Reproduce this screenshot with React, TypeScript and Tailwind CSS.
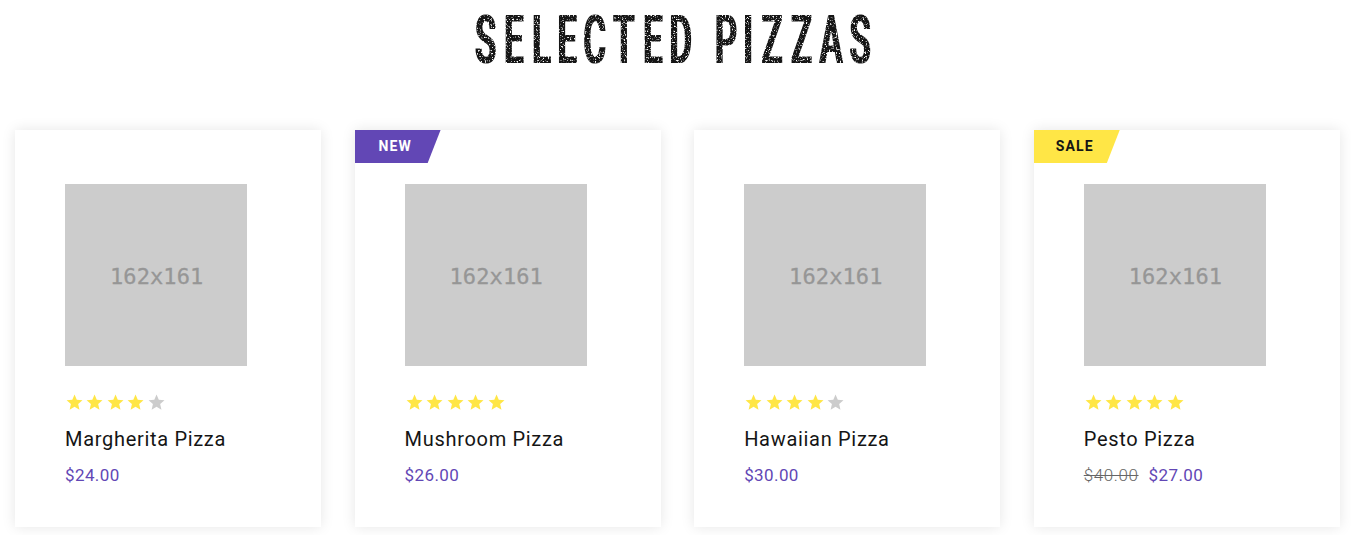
import clsx from 'clsx';

interface Pizza {
  name: string;
  price: string;
  oldPrice?: string;
  rating: number;
  badge?: 'new' | 'sale';
}

const pizzas: Pizza[] = [
  { name: 'Margherita Pizza', price: '$24.00', rating: 4 },
  { name: 'Mushroom Pizza', price: '$26.00', rating: 5, badge: 'new' },
  { name: 'Hawaiian Pizza', price: '$30.00', rating: 4 },
  { name: 'Pesto Pizza', price: '$27.00', oldPrice: '$40.00', rating: 5, badge: 'sale' },
];

const HEADING = 'SELECTED PIZZAS';
// centre of every character, the space included
const HEADING_CENTERS = [20.5, 48.8, 76.4, 102.2, 129.7, 159, 187.9, 215.7, 238, 261, 283, 307, 336.5, 366, 395.2];
const HEADING_SCALE = 0.51;

function Heading() {
  return (
    <h2 className="flex justify-center">
      <svg width="421" height="84" viewBox="0 0 421 84" aria-label={HEADING} className="overflow-visible">
        <defs>
          <filter id="worn" x="0" y="0" width="421" height="84" filterUnits="userSpaceOnUse" colorInterpolationFilters="sRGB">
            <feMorphology in="SourceGraphic" operator="dilate" radius="1 0" result="thick" />
            <feTurbulence type="fractalNoise" baseFrequency="0.73" numOctaves="2" seed="4" result="noise" />
            <feColorMatrix in="noise" type="matrix" values="0 0 0 0 0  0 0 0 0 0  0 0 0 0 0  5 0 0 0 -2.75" result="specks" />
            <feComposite in="thick" in2="specks" operator="out" />
          </filter>
        </defs>
        <g filter="url(#worn)">
          <text
            x={HEADING_CENTERS.map((x) => x / HEADING_SCALE).join(' ')}
            y="63"
            transform={`scale(${HEADING_SCALE} 1)`}
            textAnchor="middle"
            fill="#151515"
            className="font-['Roboto',sans-serif] text-[67px] font-medium"
          >
            {HEADING}
          </text>
        </g>
      </svg>
    </h2>
  );
}

function Rating({ value }: { value: number }) {
  return (
    <div className="mt-[27px] flex gap-[1.4px]">
      {[1, 2, 3, 4, 5].map((n) => (
        <svg
          key={n}
          viewBox="0 0 24 24"
          className={clsx('h-[19.1px] w-[19.1px]', n <= value ? 'fill-[#ffe646]' : 'fill-[#cccccc]')}
        >
          <path d="M12 17.27 18.18 21l-1.64-7.03L22 9.24l-7.19-.62L12 2 9.19 8.62 2 9.24l5.45 4.73L5.82 21z" />
        </svg>
      ))}
    </div>
  );
}

function PizzaCard({ pizza }: { pizza: Pizza }) {
  return (
    <article className="relative h-[397px] w-[306.2px] shrink-0 bg-white pt-[54px] pl-[50px] shadow-[0_0_13px_rgba(0,0,0,0.1)]">
      {pizza.badge && (
        <span
          className={clsx(
            'absolute top-0 left-0 h-[33px] w-[86px] text-[14px] leading-[33px] font-bold tracking-[1.1px] [clip-path:polygon(0_0,100%_0,85%_100%,0_100%)]',
            pizza.badge === 'new' ? 'bg-[#6247b5] pl-6 text-white' : 'bg-[#ffe646] pl-[22px] text-[#151515]'
          )}
        >
          {pizza.badge === 'new' ? 'NEW' : 'SALE'}
        </span>
      )}

      <div className="flex h-[182px] w-[182.3px] items-center justify-center bg-[#cccccc] pt-[3px] pl-px font-['DejaVu_Sans_Mono',monospace] text-[22px] tracking-[0.1px] text-[#969696] [-webkit-text-stroke:0.3px_#969696]">
        162x161
      </div>

      <Rating value={pizza.rating} />

      <h3 className="mt-[12.9px] text-[20px] leading-[28px] tracking-[0.69px] text-[#151515]">{pizza.name}</h3>

      <div className="mt-[10px] flex gap-[10px] text-[17px] leading-[24px] tracking-[0.4px]">
        {pizza.oldPrice && <del className="font-light tracking-[0.6px] text-[#666666]">{pizza.oldPrice}</del>}
        <span className="text-[#6247b5]">{pizza.price}</span>
      </div>
    </article>
  );
}

export default function App() {
  return (
    <section className="h-[535px] w-[1351px] overflow-hidden bg-white font-['Roboto',sans-serif]">
      <Heading />
      <div className="mt-[46px] flex gap-[33.4px] pl-[15px]">
        {pizzas.map((pizza) => (
          <PizzaCard key={pizza.name} pizza={pizza} />
        ))}
      </div>
    </section>
  );
}
